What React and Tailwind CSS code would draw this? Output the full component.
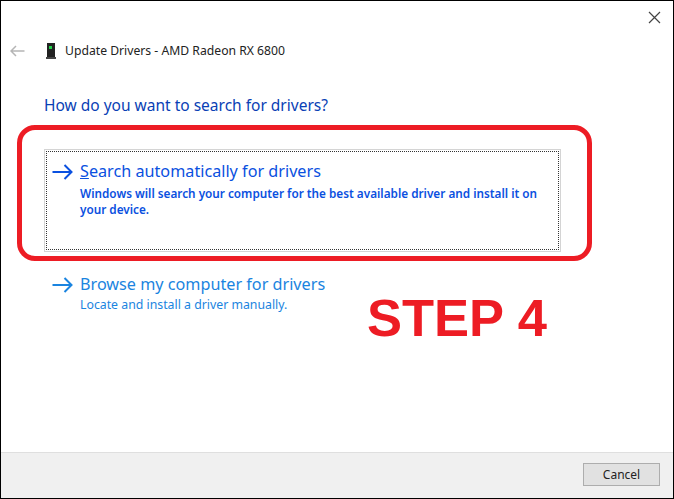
import React from "react";

function Arrow({ color }) {
  return (
    <svg width="21" height="16" viewBox="0 0 21 16" fill="none" stroke={color} strokeWidth="2" className="shrink-0">
      <path d="M0.5 8H19.5M12.5 1L19.5 8L12.5 15" />
    </svg>
  );
}

export default function App() {
  return (
    <div className="relative w-[674px] h-[499px] bg-white border border-black flex flex-col overflow-hidden font-['Noto_Sans','Open_Sans',sans-serif]">
      <div className="h-[30px] flex justify-end shrink-0">
        <svg width="13" height="13" viewBox="0 0 13 13" fill="none" stroke="#444" strokeWidth="1.2" className="mt-[10px] mr-[12px]">
          <path d="M1 1L12 12M12 1L1 12" />
        </svg>
      </div>
      <div className="flex items-center h-[40px] pl-[9px] shrink-0">
        <svg width="15" height="12" viewBox="0 0 15 12" fill="none" stroke="#b5b5b5" strokeWidth="1.5">
          <path d="M14.5 6H1M6 1L1 6L6 11" />
        </svg>
        <svg width="10" height="16" viewBox="0 0 10 16" className="ml-[21px]">
          <rect x="1" y="0" width="8" height="14" fill="#222" />
          <rect x="0" y="14" width="10" height="2" fill="#444" />
          <rect x="3" y="3" width="3" height="3" fill="#22d04a" />
        </svg>
        <span className="ml-[9px] pt-[1px] text-[12.2px] text-[#222] leading-none">Update Drivers - AMD Radeon RX 6800</span>
      </div>
      <div className="pl-[43px] mt-[24px] text-[15.5px] leading-[20px] text-[#0a3fb5] shrink-0">How do you want to search for drivers?</div>
      <div className="mt-[34px] ml-[43px] w-[517px] h-[103px] border border-[#d4d4d4] p-[1px] shrink-0">
        <div className="h-full border border-dotted border-[#333] pl-[5px] pt-[9px] flex gap-[7px]">
          <div className="pt-[3px]"><Arrow color="#0a50e0" /></div>
          <div>
            <div className="text-[16.2px] leading-[21px] text-[#0a50e0]"><span className="underline">S</span>earch automatically for drivers</div>
            <div className="text-[11.75px] leading-[16px] font-semibold text-[#0a50e0] w-[470px] mt-[3px]">Windows will search your computer for the best available driver and install it on your device.</div>
          </div>
        </div>
      </div>
      <div className="mt-[22px] ml-[51px] flex gap-[7px] shrink-0">
        <div className="pt-[3px]"><Arrow color="#1a84e0" /></div>
        <div>
          <div className="text-[16.2px] leading-[21px] text-[#1a84e0]">Browse my computer for drivers</div>
          <div className="text-[12.3px] leading-[16px] text-[#1a84e0] mt-[2px]">Locate and install a driver manually.</div>
        </div>
      </div>
      <div className="flex-1" />
      <div className="h-[46px] bg-[#f0f0f0] border-t border-[#dfdfdf] flex items-start justify-end pr-[13px] pt-[10px] shrink-0">
        <button className="w-[77px] h-[23px] bg-[#e1e1e1] border border-[#adadad] text-[12px] text-[#222] leading-none">Cancel</button>
      </div>
      <div className="absolute left-[16px] top-[124px] w-[575px] h-[136px] border-[5px] border-[#ed1c24] rounded-[18px] pointer-events-none" />
      <div className="absolute left-[366px] top-[287px] text-[52.5px] leading-[60px] font-bold text-[#ed1c24] whitespace-nowrap font-['Liberation_Sans',sans-serif]">STEP 4</div>
    </div>
  );
}
